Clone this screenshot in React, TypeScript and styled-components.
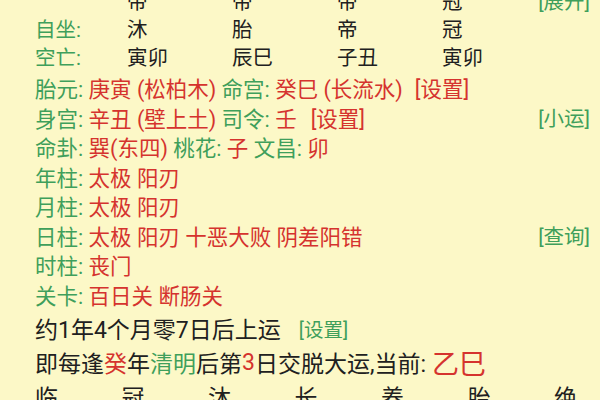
import React from 'react';
import styled, { createGlobalStyle } from 'styled-components';

const GlobalStyle = createGlobalStyle`
  html, body {
    margin: 0;
    padding: 0;
    width: 600px;
    height: 400px;
    overflow: hidden;
    background: #fcf8c7;
  }
  body {
    font-family: Roboto, "Noto Sans CJK SC", "Noto Sans", sans-serif;
    color: #202020;
  }
`;

const GREEN = '#3f9f5b';
const RED = '#d5332e';

const Page = styled.div`
  margin-top: -15px;
  padding: 0 10px 0 35px;
  display: flex;
  flex-direction: column;
`;

const StarTable = styled.div`
  display: flex;
  flex-direction: column;
  margin-bottom: 4px;
`;

const StarRow = styled.div<{ $lift?: boolean }>`
  display: grid;
  grid-template-columns: 92px 105px 105px 105px 1fr auto;
  height: 28px;
  align-items: ${({ $lift }) => ($lift ? 'start' : 'center')};
  font-size: 20.5px;
  white-space: nowrap;
`;

const Label = styled.span`
  color: ${GREEN};
`;

const Cell = styled.span`
  color: #202020;
`;

const InfoRow = styled.div`
  display: flex;
  align-items: center;
  height: 29.5px;
  font-size: 21.5px;
  white-space: nowrap;
`;

const Value = styled.span<{ $tone?: 'red' | 'green' | 'dark' }>`
  color: ${({ $tone }) =>
    $tone === 'green' ? GREEN : $tone === 'dark' ? '#202020' : RED};
`;

const Link = styled.span<{ $tone?: 'red' | 'green'; $gap?: number }>`
  color: ${({ $tone }) => ($tone === 'red' ? RED : GREEN)};
  margin-left: ${({ $gap }) => ($gap ?? 0)}px;
`;

const RightLink = styled.span`
  color: ${GREEN};
  margin-left: auto;
  font-size: 20.5px;
`;

const BigLine = styled.div<{ $first?: boolean }>`
  display: flex;
  align-items: center;
  height: 34px;
  margin-top: ${({ $first }) => ($first ? 2 : 0)}px;
  font-size: 23px;
  white-space: nowrap;
  color: #202020;
`;

const SmallLink = styled.span`
  color: ${GREEN};
  font-size: 19.5px;
  margin-left: 18px;
`;

const Current = styled.span`
  color: ${RED};
  font-size: 27px;
  margin-left: 6px;
`;

const YunRow = styled.div`
  display: grid;
  grid-template-columns: repeat(7, 86.5px);
  height: 34px;
  align-items: center;
  font-size: 23px;
  white-space: nowrap;
`;

const stars = [
  { label: '', cells: ['帝', '帝', '帝', '冠'], action: '[展开]', lift: true },
  { label: '自坐:', cells: ['沐', '胎', '帝', '冠'] },
  { label: '空亡:', cells: ['寅卯', '辰巳', '子丑', '寅卯'] },
];

const yun = ['临', '冠', '沐', '长', '养', '胎', '绝'];

export default function App() {
  return (
    <>
      <GlobalStyle />
      <Page>
        <StarTable>
          {stars.map((row, i) => (
            <StarRow key={i} $lift={row.lift}>
              <Label>{row.label}</Label>
              {row.cells.map((c, j) => (
                <Cell key={j}>{c}</Cell>
              ))}
              {row.action ? <RightLink>{row.action}</RightLink> : <span />}
            </StarRow>
          ))}
        </StarTable>

        <InfoRow>
          <Label>胎元:</Label>&nbsp;<Value>庚寅 (松柏木)</Value>&nbsp;
          <Label>命宫:</Label>&nbsp;<Value>癸巳 (长流水)</Value>
          <Link $tone="red" $gap={12}>[设置]</Link>
        </InfoRow>
        <InfoRow>
          <Label>身宫:</Label>&nbsp;<Value>辛丑 (壁上土)</Value>&nbsp;
          <Label>司令:</Label>&nbsp;<Value>壬</Value>
          <Link $tone="red" $gap={14}>[设置]</Link>
          <RightLink>[小运]</RightLink>
        </InfoRow>
        <InfoRow>
          <Label>命卦:</Label>&nbsp;<Value>巽(东四)</Value>&nbsp;
          <Label>桃花:</Label>&nbsp;<Value>子</Value>&nbsp;
          <Label>文昌:</Label>&nbsp;<Value>卯</Value>
        </InfoRow>
        <InfoRow>
          <Label>年柱:</Label>&nbsp;<Value>太极 阳刃</Value>
        </InfoRow>
        <InfoRow>
          <Label>月柱:</Label>&nbsp;<Value>太极 阳刃</Value>
        </InfoRow>
        <InfoRow>
          <Label>日柱:</Label>&nbsp;<Value>太极 阳刃 十恶大败 阴差阳错</Value>
          <RightLink>[查询]</RightLink>
        </InfoRow>
        <InfoRow>
          <Label>时柱:</Label>&nbsp;<Value>丧门</Value>
        </InfoRow>
        <InfoRow>
          <Label>关卡:</Label>&nbsp;<Value>百日关 断肠关</Value>
        </InfoRow>

        <BigLine $first>
          约1年4个月零7日后上运
          <SmallLink>[设置]</SmallLink>
        </BigLine>
        <BigLine>
          即每逢<Value>癸</Value>年<Value $tone="green">清明</Value>后第
          <Value>3</Value>日交脱大运,当前:
          <Current>乙巳</Current>
        </BigLine>

        <YunRow>
          {yun.map((y) => (
            <Cell key={y}>{y}</Cell>
          ))}
        </YunRow>
      </Page>
    </>
  );
}
